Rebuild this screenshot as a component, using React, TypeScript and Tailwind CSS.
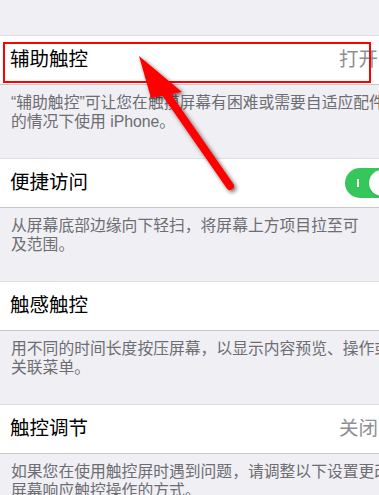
import React from 'react';

const font = { fontFamily: '"Liberation Sans", "Noto Sans CJK SC", sans-serif' };

interface RowProps {
  title: string;
  value?: string;
  toggle?: boolean;
  lines: string[];
}

const Chevron = () => (
  <svg width="9" height="15" viewBox="0 0 9 15" className="shrink-0">
    <path d="M1.5 1.5 L7.5 7.5 L1.5 13.5" fill="none" stroke="#c7c7cc" strokeWidth="2" />
  </svg>
);

const Toggle = () => (
  <div className="relative w-[52px] h-[30px] rounded-full bg-[#35c759] shrink-0">
    <div className="absolute left-[12px] top-[11px] w-[1.5px] h-[8px] bg-white" />
    <div className="absolute right-[2px] top-[2px] w-[26px] h-[26px] rounded-full bg-white shadow" />
  </div>
);

const SettingRow: React.FC<RowProps> = ({ title, value, toggle, lines }) => (
  <div>
    <div className="flex items-center justify-between h-[50px] bg-white border-t border-b border-t-[#dedee3] border-b-[#c8c7cc] pl-[10px] pr-[15px]">
      <span className="text-[19.5px] text-black leading-none">{title}</span>
      {toggle ? (
        <Toggle />
      ) : value ? (
        <div className="flex items-center gap-[10px]">
          <span className="text-[19.5px] text-[#8e8e93] leading-none">{value}</span>
          <Chevron />
        </div>
      ) : null}
    </div>
    <div className="pl-[11px] pt-[9px] pb-[27px] text-[15.8px] leading-[18.5px] text-[#6d6d72] whitespace-nowrap">
      {lines.map((l) => (
        <div key={l}>{l}</div>
      ))}
    </div>
  </div>
);

const Arrow = () => (
  <svg className="absolute inset-0 pointer-events-none" width="379" height="495" viewBox="0 0 379 495">
    <defs>
      <filter id="sh" x="-20%" y="-20%" width="160%" height="160%">
        <feDropShadow dx="2" dy="2" stdDeviation="2.2" floodColor="#000" floodOpacity="0.6" />
      </filter>
    </defs>
    <g filter="url(#sh)">
      <line x1="162" y1="88" x2="230" y2="186" stroke="#ff0000" strokeWidth="8" strokeLinecap="round" />
      <polygon points="139,56 182,92 151,98" fill="#ff0000" />
    </g>
  </svg>
);

export default function App() {
  return (
    <div className="relative w-[379px] h-[495px] overflow-hidden bg-[#efeff4]" style={font}>
      <div className="w-[412px] pt-[35px]">
        <SettingRow
          title="辅助触控"
          value="打开"
          lines={['“辅助触控”可让您在触摸屏幕有困难或需要自适应配件', '的情况下使用 iPhone。']}
        />
        <SettingRow
          title="便捷访问"
          toggle
          lines={['从屏幕底部边缘向下轻扫，将屏幕上方项目拉至可', '及范围。']}
        />
        <SettingRow
          title="触感触控"
          lines={['用不同的时间长度按压屏幕，以显示内容预览、操作或', '关联菜单。']}
        />
        <SettingRow
          title="触控调节"
          value="关闭"
          lines={['如果您在使用触控屏时遇到问题，请调整以下设置更改', '屏幕响应触控操作的方式。']}
        />
      </div>
      <div className="absolute left-[3px] top-[42px] w-[368px] h-[41px] border-2 border-[#ff0000]" />
      <Arrow />
    </div>
  );
}
